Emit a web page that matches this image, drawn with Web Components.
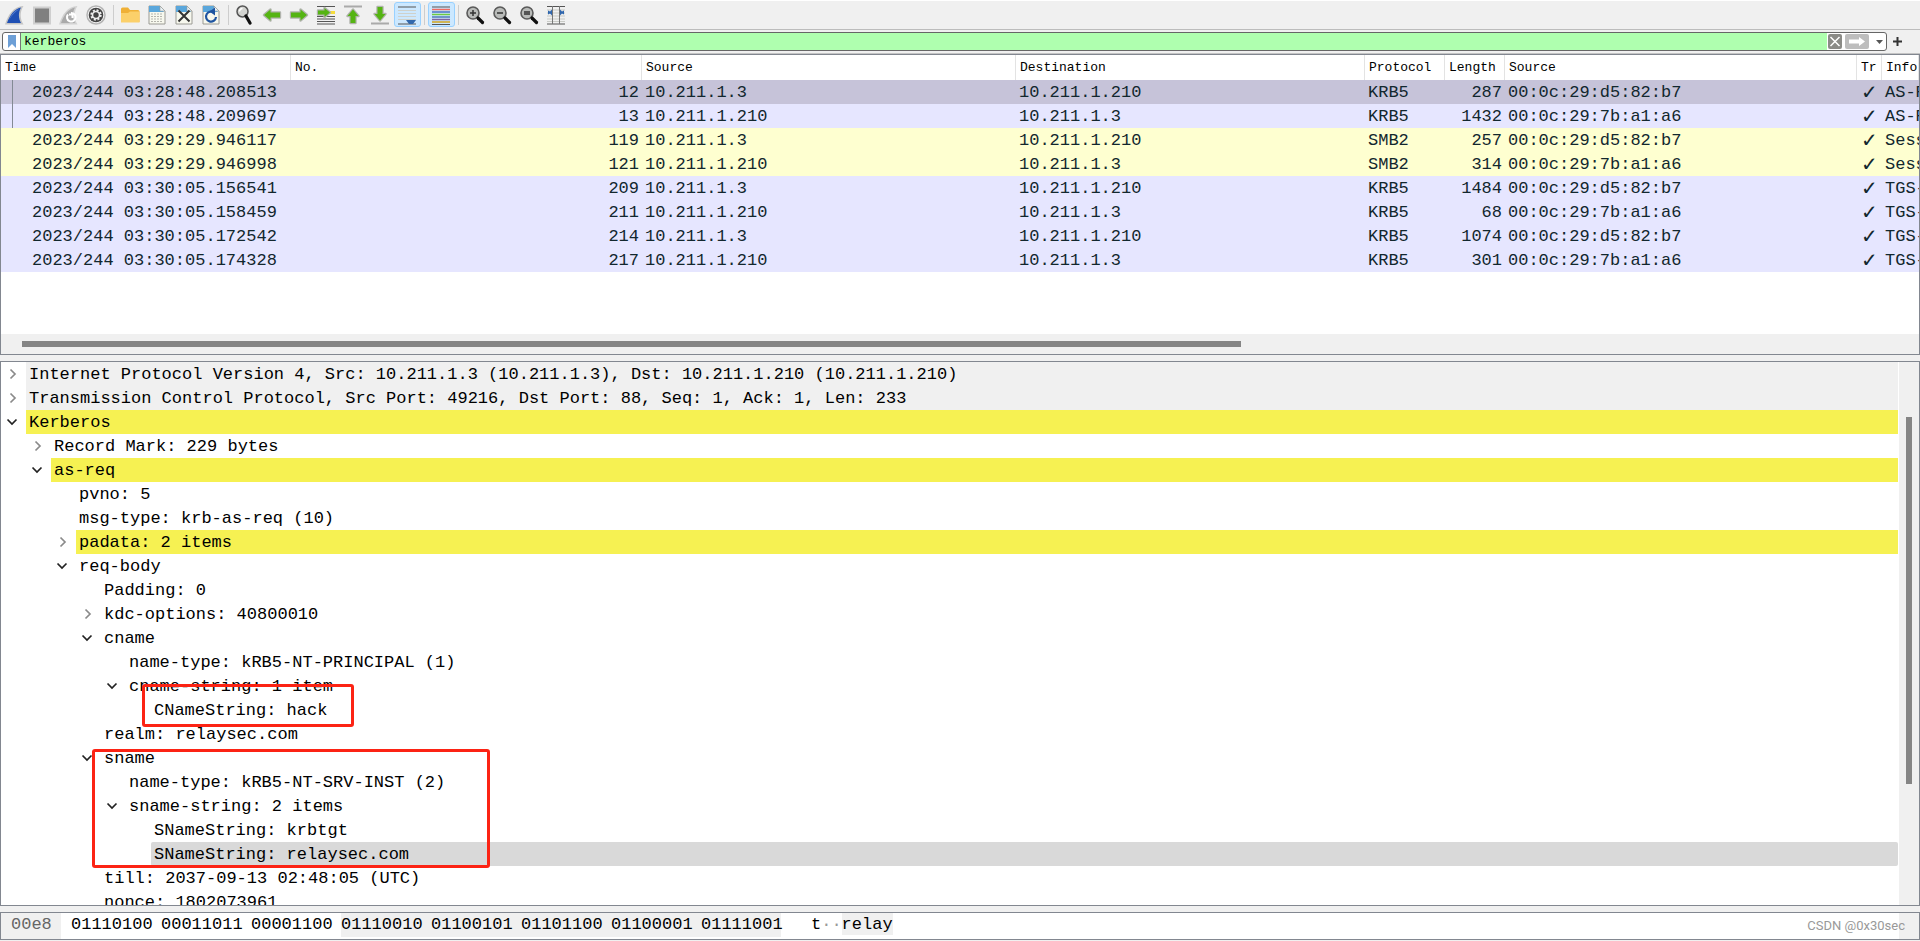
<!DOCTYPE html>
<html lang="en">
<head>
<meta charset="utf-8">
<title>Packet analyzer</title>
<style>
html,body{margin:0;height:100%}
body{background:#f0f0f0;color:#000;font:17px/26px "Liberation Mono",monospace;overflow:hidden}
</style>
</head>
<body>
<analyzer-window></analyzer-window>
<script>
const make = (name, html, setup) => {
  const template = document.createElement('template');
  template.innerHTML = html;
  customElements.define(name, class extends HTMLElement {
    connectedCallback() {
      if (this.shadowRoot) return;
      this.attachShadow({mode: 'open'}).append(template.content.cloneNode(true));
      if (setup) setup(this, this.shadowRoot);
    }
  });
};

const sheet = '<path d="M2 1h11l5 5v13H2z" fill="#f7f8ee" stroke="#9a9a94"/><path d="M2 1h11l4 6H2z" fill="#5aa7dc"/><path d="M13 1v5h5z" fill="#e8f2f8" stroke="#9a9a94" stroke-width=".6"/>';
const lens = '<circle cx="8" cy="8" r="6" fill="#b9bbb9" stroke="#5a5a5a" stroke-width="1.6"/><path d="M13 13l4.500 4.500" stroke="#111" stroke-width="3.200" stroke-linecap="round"/>';
const arrow = 'fill="#55b413" stroke="#b0b3ac" stroke-width="2.400" stroke-linejoin="round" paint-order="stroke"';
const icons = {
  start: '<path d="M0 19.500C3 10 8 1.500 18.500 1 14.500 7 15 14 18.500 19.500z" fill="#c4c4c4"/><path d="M2 18C5 10 9 4 16 2.500c-3 5-2.500 11 0 15.500z" fill="#1f4fb4"/><path d="M4 15C7 8 11 5 14.500 4c-3 2-7 5-10.500 11z" fill="#5c82d0"/>',
  stop: '<path d="M1 1.500h18v18H1z" fill="#cfcfcf"/><path d="M3 3.500h14v14H3z" fill="#808080"/>',
  restart: '<path d="M0 19.500C3 10 8 1.500 18.500 1 14.500 7 15 14 18.500 19.500z" fill="#d2d2d2"/><path d="M2 18C5 10 9 4 16 2.500c-3 5-2.500 11 0 15.500z" fill="#aaa"/><path d="M12 8a4.300 4.300 0 1 1-3 1.500M13.500 13V9.500H10" fill="none" stroke="#fff" stroke-width="2"/>',
  options: '<circle cx="10" cy="10" r="9" fill="#f7f7f7" stroke="#b4b4b4" stroke-width="1.500"/><circle cx="10" cy="10" r="7.300" fill="#444"/><circle cx="10" cy="10" r="4.300" fill="#eee"/><circle cx="10" cy="10" r="4.700" fill="none" stroke="#eee" stroke-width="2" stroke-dasharray="2 1.690"/><circle cx="10" cy="10" r="2.700" fill="#444"/>',
  open: '<path d="M1 4q0-1.500 1.500-1.500H8l2 2.500h8q1.500 0 1.500 1.500V17H1z" fill="#efb036"/><path d="M1 8h7l2-1.500h9.500V17.500H1z" fill="#fbd06a"/>',
  save: sheet + '<path d="M4 9h12M4 11.500h12M4 14h12M4 16.500h12" stroke="#b5b5ad" stroke-width="1.200" stroke-dasharray="2 1"/>',
  close: sheet + '<path d="M4.500 5.500l11 11M15.500 5.500l-11 11" stroke="#333" stroke-width="2"/>',
  reload: sheet + '<path d="M13.500 8A5 5 0 1 0 15 12" fill="none" stroke="#1f54a0" stroke-width="2.200"/><path d="M14 2.500L8.500 6.500l5.500 4z" fill="#1f54a0"/>',
  find: '<circle cx="7.500" cy="6.500" r="5.500" fill="#d2d3d0" stroke="#555" stroke-width="1.500"/><path d="M11 11l4 7" stroke="#111" stroke-width="3.200" stroke-linecap="round"/><path d="M4.500 6.500a3 3 0 0 1 3-3" stroke="#fff" fill="none" stroke-width="1.500"/>',
  back: `<path d="M2 10l6.500-5.500V7.500H18v5H8.500v3z" ${arrow}/>`,
  forward: `<path d="M18 10l-6.500-5.500V7.500H2v5h9.500v3z" ${arrow}/>`,
  goto: '<path d="M1 1.500h18M1 11.500h18M1 14h18M1 16.500h18M1 19h18" stroke="#555" stroke-width="1.100"/><path d="M12 6h7v3h-7z" fill="#f5dc3c"/>' + `<path d="M14 7.500L8.500 3V5.500H2v4h6.500V12z" ${arrow}/>`,
  first: `<path d="M1 1.500h18" stroke="#aaa" stroke-width="2"/><path d="M10 4.500l5.500 6.500h-3V18h-5v-7h-3z" ${arrow}/>`,
  last: `<path d="M1 18.500h18" stroke="#aaa" stroke-width="2"/><path d="M10 15.500L15.500 9h-3V2h-5v7h-3z" ${arrow}/>`,
  follow: '<path d="M1 2h18M1 19h18" stroke="#555" stroke-width="1.200"/><path d="M1 5.500h18M1 8.500h18M1 11.500h18M1 14.500h18" stroke="#cfd1cb"/><path d="M9 15h10l-3 4h-4z" fill="#3268ac"/>',
  color: '<path d="M1 2h18M1 19.500h18" stroke="#555" stroke-width="1.200"/><path d="M1 4.500h18" stroke="#ef6a62" stroke-width="1.500"/><path d="M1 7h18" stroke="#4b75c2" stroke-width="1.500"/><path d="M1 9.500h18" stroke="#70ca41" stroke-width="1.500"/><path d="M1 12h18" stroke="#527bb7" stroke-width="1.500"/><path d="M1 14.500h18" stroke="#8064a0" stroke-width="1.500"/><path d="M1 17h18" stroke="#d2a51b" stroke-width="1.500"/>',
  zoomin: lens + '<path d="M5 8h6M8 5v6" stroke="#333" stroke-width="1.500"/>',
  zoomout: lens + '<path d="M5 8h6" stroke="#333" stroke-width="1.500"/>',
  zoomreset: lens + '<path d="M5 7h6M5 9h6" stroke="#333" stroke-width="1.300"/>',
  resize: '<path d="M1 1.500h18M1 19h18" stroke="#555" stroke-width="1.200"/><path d="M1 5h18M1 8h18M1 11h18M1 14h18M1 16.500h18" stroke="#c8cac5"/><path d="M6.500 1v18M13.500 1v18" stroke="#777"/><path d="M2 5.500l2 1 2-2v6l-2-2-2 1zM18 5.500l-2 1-2-2v6l2-2 2 1z" fill="#2f66ad"/>'
};

make('tool-button', `<style>
:host{display:block}
button{display:flex;align-items:center;width:27px;height:25px;padding:0 0 0 2px;border:1px solid transparent;border-radius:3px;background:none}
:host([active]) button{background:#cce8ff;border-color:#99d1ff}
svg{display:block;width:20px;height:20px}
</style><button type="button"><svg viewBox="0 0 20 20"></svg></button>`, (el, root) => {
  root.querySelector('svg').innerHTML = icons[el.getAttribute('icon')];
  root.querySelector('button').setAttribute('aria-label', el.getAttribute('icon'));
});

make('tool-bar', `<style>
:host{display:flex;flex:none;height:25px;padding:1px 2px 2px;border-top:1px solid #fff;border-bottom:1px solid #bcbcbc}
i{flex:none;width:1px;height:20px;margin:3px;background:#cdcdcd}
</style>
<tool-button icon="start"></tool-button><tool-button icon="stop"></tool-button><tool-button icon="restart"></tool-button><tool-button icon="options"></tool-button><i></i>
<tool-button icon="open"></tool-button><tool-button icon="save"></tool-button><tool-button icon="close"></tool-button><tool-button icon="reload"></tool-button><i></i>
<tool-button icon="find"></tool-button><tool-button icon="back"></tool-button><tool-button icon="forward"></tool-button><tool-button icon="goto"></tool-button><tool-button icon="first"></tool-button><tool-button icon="last"></tool-button><tool-button icon="follow" active></tool-button><i></i>
<tool-button icon="color" active></tool-button><i></i>
<tool-button icon="zoomin"></tool-button><tool-button icon="zoomout"></tool-button><tool-button icon="zoomreset"></tool-button><tool-button icon="resize"></tool-button>`);

make('display-filter', `<style>
:host{display:flex;flex:none;height:19px;padding:2px 0;border-bottom:1px solid #c4c4c4}
.box{display:flex;flex:1;box-sizing:border-box;margin-left:2px;border:1px solid #666;border-radius:3px;background:#fff;overflow:hidden}
button{display:flex;align-items:center;justify-content:center;padding:0;border:0;background:none}
svg{display:block}
.mark{width:18px;border-right:1px solid #777}
input{flex:1;min-width:0;padding:1px 3px 0;border:0;outline:0;background:#afffaf;color:#000;font:13px/16px "Liberation Mono",monospace}
.tools{display:flex;align-items:center;gap:3px;padding-left:1px}
.drop{width:14px;height:17px}
.add{width:33px;padding-right:13px}
</style>
<div class="box"><button class="mark" type="button" aria-label="Bookmarks"><svg width="10" height="15"><path d="M1 1h8v13L5 10l-4 4z" fill="#6d9fd6"/></svg></button>
<input aria-label="Display filter" value="kerberos" spellcheck="false">
<div class="tools"><button type="button" aria-label="Clear"><svg width="14" height="15"><rect width="14" height="15" rx="2" fill="#8b8b87"/><path d="M2.500 3l9 9M11.500 3l-9 9" stroke="#fff" stroke-width="1.500"/></svg></button>
<button type="button" aria-label="Apply"><svg width="24" height="15"><rect width="24" height="15" rx="2" fill="#bdbdbd"/><path d="M4 5.500h10V3l6 4.500-6 4.500V9.500H4z" fill="#fff"/></svg></button>
<button class="drop" type="button" aria-label="History"><svg width="7" height="4"><path d="M0 0h7L3.500 4z" fill="#555"/></svg></button></div></div>
<button class="add" type="button" aria-label="Add filter button"><svg width="9" height="9"><path d="M0 4.500h9M4.500 0v9" stroke="#333" stroke-width="2"/></svg></button>`);

make('packet-list', `<style>
:host{display:flex;flex-direction:column;flex:none;border:1px solid #828790;background:#fff;overflow:hidden}
.view{position:relative;height:279px;overflow:hidden}
table{width:100%;table-layout:fixed;border-collapse:separate;border-spacing:0}
th{height:25px;padding:1px 0 0 4px;border-right:1px solid #e3e3e3;box-sizing:border-box;text-align:left;font:13px/24px "Liberation Mono",monospace;white-space:nowrap;overflow:hidden}
td{height:24px;box-sizing:border-box;padding:1px 3px 0;line-height:23px;white-space:nowrap;overflow:hidden;color:#12272e}
td:first-child{padding-left:31px}
td:nth-child(2),td:nth-child(6){text-align:right}
td:nth-child(8){text-align:center;font-family:"DejaVu Sans",sans-serif;font-size:20px}
tr{background:#e6e6ff}
thead tr{background:#fff}
tr.smb{background:#feffd0}
tr.selected{background:#c6c3d9}
.related{position:absolute;left:11px;top:25px;width:1px;height:48px;background:#838a94}
.scroll{display:flex;align-items:center;height:20px;padding:0 21px;background:#f0f0f0}
.thumb{width:65%;height:6px;background:#858585}
</style>
<div class="view"><table><colgroup><col style="width:290px"><col style="width:351px"><col style="width:374px"><col style="width:349px"><col style="width:80px"><col style="width:60px"><col style="width:352px"><col style="width:25px"><col></colgroup>
<thead><tr><th>Time</th><th>No.</th><th>Source</th><th>Destination</th><th>Protocol</th><th>Length</th><th>Source</th><th>Tr</th><th>Info</th></tr></thead><tbody></tbody></table><span class="related"></span></div>
<div class="scroll"><div class="thumb"></div></div>`, (el, root) => {
  const client = ['10.211.1.3', '10.211.1.210', '00:0c:29:d5:82:b7'];
  const server = ['10.211.1.210', '10.211.1.3', '00:0c:29:7b:a1:a6'];
  const rows = [
    ['03:28:48.208513', 12, client, 'KRB5', 287, 'AS-R', 'selected'],
    ['03:28:48.209697', 13, server, 'KRB5', 1432, 'AS-R'],
    ['03:29:29.946117', 119, client, 'SMB2', 257, 'Sess', 'smb'],
    ['03:29:29.946998', 121, server, 'SMB2', 314, 'Sess', 'smb'],
    ['03:30:05.156541', 209, client, 'KRB5', 1484, 'TGS-'],
    ['03:30:05.158459', 211, server, 'KRB5', 68, 'TGS-'],
    ['03:30:05.172542', 214, client, 'KRB5', 1074, 'TGS-'],
    ['03:30:05.174328', 217, server, 'KRB5', 301, 'TGS-']
  ];
  root.querySelector('tbody').innerHTML = rows.map(([t, n, s, p, l, info, c = '']) =>
    `<tr class="${c}">` + ['2023/244 ' + t, n, s[0], s[1], p, l, s[2], '✓', info].map(v => `<td>${v}</td>`).join('') + '</tr>').join('');
});

make('tree-item', `<style>
:host{display:flex;height:24px;white-space:nowrap}
button{display:flex;align-items:center;flex:none;width:25px;padding:0 0 0 5px;border:0;background:none}
.label{flex:1;padding-left:3px}
:host([tone=protocol]) .label{background:#f0f0f0}
:host([tone=match]) .label{background:#f6f152}
:host([tone=current]) .label{background:#d9d9d9;border-radius:2px}
</style><button type="button" aria-label="Expand or collapse"></button><div class="label"><slot></slot></div>`, (el, root) => {
  el.style.paddingLeft = el.getAttribute('level') * 25 + 'px';
  const state = el.getAttribute('state');
  const button = root.querySelector('button');
  if (!state) { button.style.visibility = 'hidden'; return; }
  button.innerHTML = state === 'open'
    ? '<svg width="12" height="12"><path d="M1.500 3.500L6 8 10.500 3.500" fill="none" stroke="#222" stroke-width="1.700"/></svg>'
    : '<svg width="12" height="12"><path d="M4.500 1.500L9 6 4.500 10.500" fill="none" stroke="#8a8a8a" stroke-width="1.700"/></svg>';
});

make('packet-details', `<style>
:host{display:flex;flex:1;min-height:0;margin-top:6px;border:1px solid #828790;background:#fff;overflow:hidden}
.tree{position:relative;flex:1;min-width:0;margin-right:1px;overflow:hidden}
.scroll{flex:none;width:20px;background:#f0f0f0}
.thumb{width:6px;height:367px;margin:55px auto 0;background:#858585}
.note{position:absolute;box-sizing:border-box;border:3px solid #fc2314;border-radius:3px;pointer-events:none}
.client{left:141px;top:322px;width:212px;height:43px}
.server{left:91px;top:387px;width:398px;height:119px}
</style>
<div class="tree">
<tree-item level="0" state="closed" tone="protocol">Internet Protocol Version 4, Src: 10.211.1.3 (10.211.1.3), Dst: 10.211.1.210 (10.211.1.210)</tree-item>
<tree-item level="0" state="closed" tone="protocol">Transmission Control Protocol, Src Port: 49216, Dst Port: 88, Seq: 1, Ack: 1, Len: 233</tree-item>
<tree-item level="0" state="open" tone="match">Kerberos</tree-item>
<tree-item level="1" state="closed">Record Mark: 229 bytes</tree-item>
<tree-item level="1" state="open" tone="match">as-req</tree-item>
<tree-item level="2">pvno: 5</tree-item>
<tree-item level="2">msg-type: krb-as-req (10)</tree-item>
<tree-item level="2" state="closed" tone="match">padata: 2 items</tree-item>
<tree-item level="2" state="open">req-body</tree-item>
<tree-item level="3">Padding: 0</tree-item>
<tree-item level="3" state="closed">kdc-options: 40800010</tree-item>
<tree-item level="3" state="open">cname</tree-item>
<tree-item level="4">name-type: kRB5-NT-PRINCIPAL (1)</tree-item>
<tree-item level="4" state="open">cname-string: 1 item</tree-item>
<tree-item level="5">CNameString: hack</tree-item>
<tree-item level="3">realm: relaysec.com</tree-item>
<tree-item level="3" state="open">sname</tree-item>
<tree-item level="4">name-type: kRB5-NT-SRV-INST (2)</tree-item>
<tree-item level="4" state="open">sname-string: 2 items</tree-item>
<tree-item level="5">SNameString: krbtgt</tree-item>
<tree-item level="5" tone="current">SNameString: relaysec.com</tree-item>
<tree-item level="3">till: 2037-09-13 02:48:05 (UTC)</tree-item>
<tree-item level="3">nonce: 1802073961</tree-item>
<div class="note client"></div><div class="note server"></div>
</div>
<div class="scroll"><div class="thumb"></div></div>`);

make('packet-bytes', `<style>
:host{position:relative;display:flex;flex:none;height:26px;line-height:24px;margin:6px 0 1px;border:1px solid #828790;background:#fff;white-space:pre}
.offset{width:50px;padding-left:10px;margin-right:10px;background:#f0f0f0;color:#666}
.bits{display:grid;grid-template-columns:repeat(8,90px);height:22px;width:710px;margin-right:30px}
.bits span{width:90px}
.bits span:last-child{width:80px}
.on{background:#f0f0f0}
.ascii{height:22px;flex:1}
.ascii i{font-style:normal;color:#999}
.ascii .on{display:inline-block;height:22px}
.scroll{width:20px;background:#f0f0f0}
.mark{position:absolute;right:14px;top:3px;font:13px/20px Roboto,sans-serif;color:#999}
</style>
<div class="offset">00e8</div>
<div class="bits"><span>01110100</span><span>00011011</span><span>00001100</span><span class="on">01110010</span><span class="on">01100101</span><span class="on">01101100</span><span class="on">01100001</span><span class="on">01111001</span></div>
<div class="ascii">t<i>··</i><span class="on">relay</span></div>
<div class="scroll"></div><span class="mark">CSDN @0x30sec</span>`);

make('analyzer-window', `<style>
:host{display:flex;flex-direction:column;height:100vh}
</style><tool-bar></tool-bar><display-filter></display-filter><packet-list></packet-list><packet-details></packet-details><packet-bytes></packet-bytes>`);
</script>
</body>
</html>
